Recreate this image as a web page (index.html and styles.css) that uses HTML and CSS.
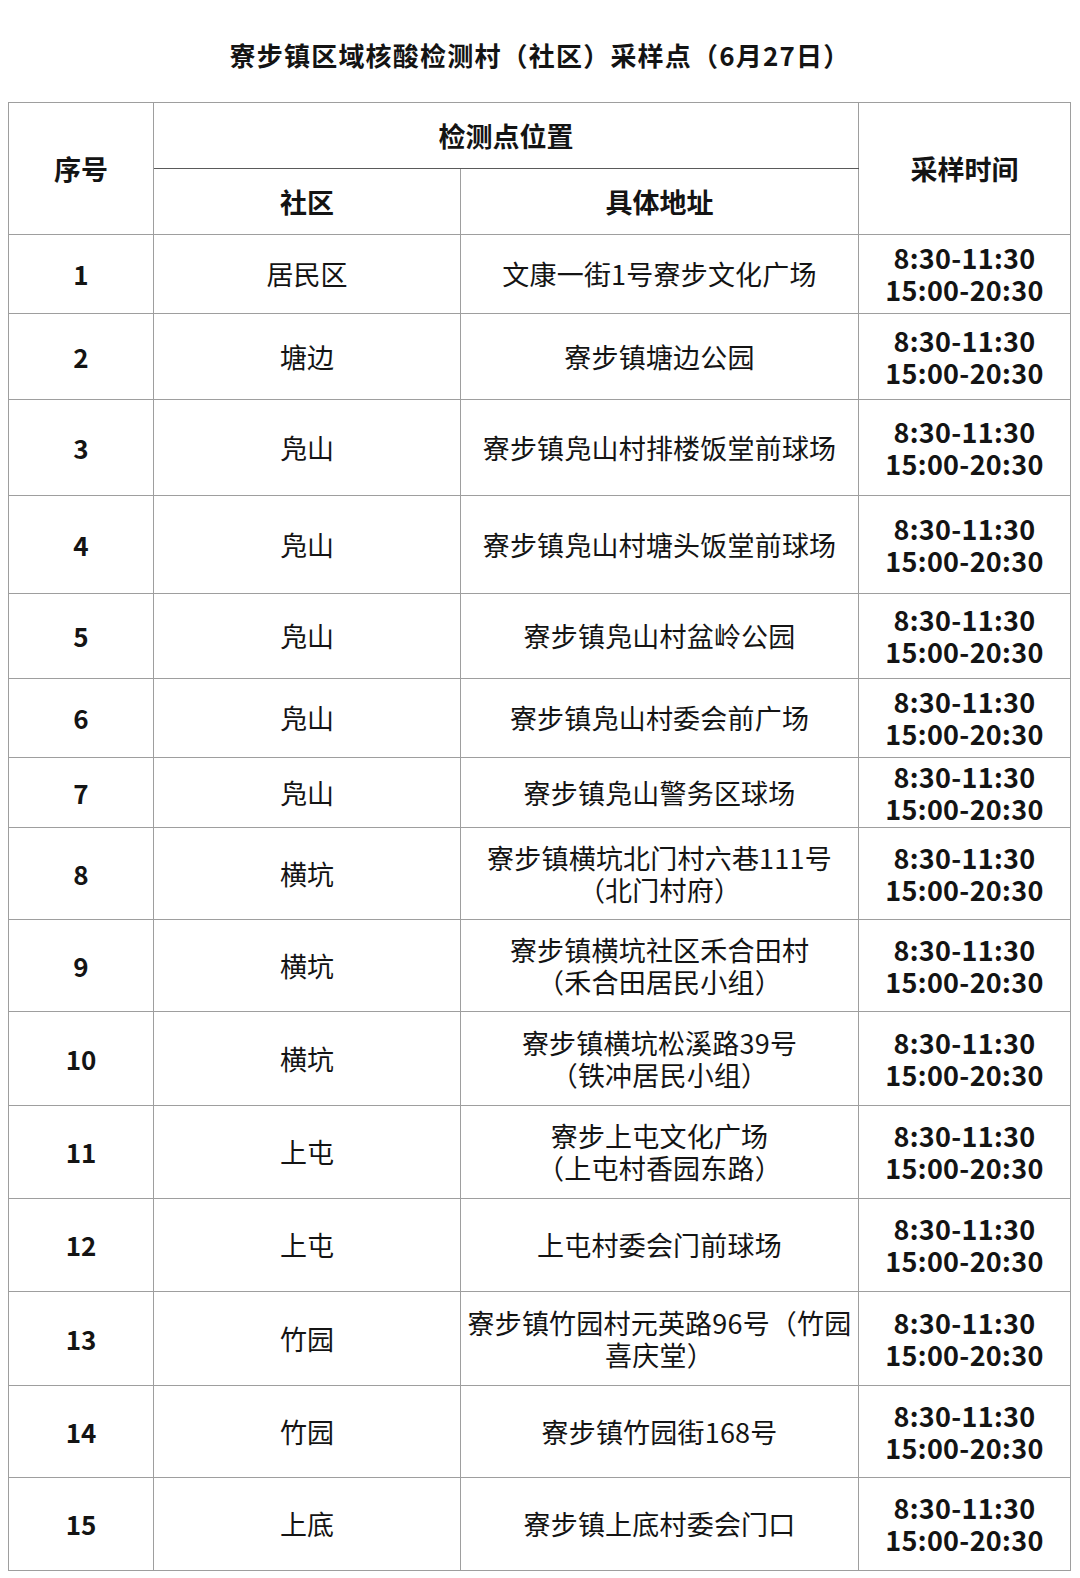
FILE: index.html
```html
<!DOCTYPE html>
<html lang="zh-CN">
<head>
<meta charset="utf-8">
<title>寮步镇区域核酸检测村（社区）采样点（6月27日）</title>
<link rel="stylesheet" href="styles.css">
</head>
<body>
<h1 class="title">寮步镇区域核酸检测村（社区）采样点（6月27日）</h1>
<table class="sites">
  <colgroup>
    <col class="c-no"><col class="c-area"><col class="c-addr"><col class="c-time">
  </colgroup>
  <thead>
    <tr class="h1">
      <th rowspan="2">序号</th>
      <th colspan="2" class="loc">检测点位置</th>
      <th rowspan="2" class="time-h">采样时间</th>
    </tr>
    <tr class="h2">
      <th>社区</th>
      <th class="addr-h">具体地址</th>
    </tr>
  </thead>
  <tbody>
    <tr><td class="no">1</td><td>居民区</td><td class="addr">文康一街1号寮步文化广场</td><td class="time">8:30-11:30<br>15:00-20:30</td></tr>
    <tr><td class="no">2</td><td>塘边</td><td class="addr">寮步镇塘边公园</td><td class="time">8:30-11:30<br>15:00-20:30</td></tr>
    <tr><td class="no">3</td><td>凫山</td><td class="addr">寮步镇凫山村排楼饭堂前球场</td><td class="time">8:30-11:30<br>15:00-20:30</td></tr>
    <tr><td class="no">4</td><td>凫山</td><td class="addr">寮步镇凫山村塘头饭堂前球场</td><td class="time">8:30-11:30<br>15:00-20:30</td></tr>
    <tr><td class="no">5</td><td>凫山</td><td class="addr">寮步镇凫山村盆岭公园</td><td class="time">8:30-11:30<br>15:00-20:30</td></tr>
    <tr><td class="no">6</td><td>凫山</td><td class="addr">寮步镇凫山村委会前广场</td><td class="time">8:30-11:30<br>15:00-20:30</td></tr>
    <tr><td class="no">7</td><td>凫山</td><td class="addr">寮步镇凫山警务区球场</td><td class="time">8:30-11:30<br>15:00-20:30</td></tr>
    <tr><td class="no">8</td><td>横坑</td><td class="addr">寮步镇横坑北门村六巷111号<br>（北门村府）</td><td class="time">8:30-11:30<br>15:00-20:30</td></tr>
    <tr><td class="no">9</td><td>横坑</td><td class="addr">寮步镇横坑社区禾合田村<br>（禾合田居民小组）</td><td class="time">8:30-11:30<br>15:00-20:30</td></tr>
    <tr><td class="no">10</td><td>横坑</td><td class="addr">寮步镇横坑松溪路39号<br>（铁冲居民小组）</td><td class="time">8:30-11:30<br>15:00-20:30</td></tr>
    <tr><td class="no">11</td><td>上屯</td><td class="addr">寮步上屯文化广场<br>（上屯村香园东路）</td><td class="time">8:30-11:30<br>15:00-20:30</td></tr>
    <tr><td class="no">12</td><td>上屯</td><td class="addr">上屯村委会门前球场</td><td class="time">8:30-11:30<br>15:00-20:30</td></tr>
    <tr><td class="no">13</td><td>竹园</td><td class="addr">寮步镇竹园村元英路96号（竹园<br>喜庆堂）</td><td class="time">8:30-11:30<br>15:00-20:30</td></tr>
    <tr><td class="no">14</td><td>竹园</td><td class="addr">寮步镇竹园街168号</td><td class="time">8:30-11:30<br>15:00-20:30</td></tr>
    <tr><td class="no">15</td><td>上底</td><td class="addr">寮步镇上底村委会门口</td><td class="time">8:30-11:30<br>15:00-20:30</td></tr>
  </tbody>
</table>
</body>
</html>
```

FILE: styles.css
```css
html, body {
  margin: 0;
  padding: 0;
  background: #ffffff;
}

body {
  width: 1080px;
  font-family: "Noto Sans CJK SC", "Noto Sans", sans-serif;
  color: #141414;
}

.title {
  margin: 0;
  height: 102px;
  box-sizing: border-box;
  padding-top: 37px;
  font-size: 26px;
  line-height: 36px;
  font-weight: 700;
  text-align: center;
  letter-spacing: 1.2px;
}

.sites {
  margin-left: 8px;
  width: 1062px;
  border-collapse: collapse;
  table-layout: fixed;
}

.c-no { width: 145px; }
.c-area { width: 307px; }
.c-addr { width: 398px; }
.c-time { width: 212px; }

.sites th,
.sites td {
  border: 1px solid #9e9e9e;
  padding: 0;
  text-align: center;
  vertical-align: middle;
  font-size: 27px;
  line-height: 32px;
  white-space: nowrap;
}

.sites th {
  font-weight: 700;
}

.h1 th,
.h2 th {
  height: 65px;
}

.sites .loc {
  border-bottom-color: #5a5a5a;
}

.sites .addr-h,
.sites td.addr {
  border-left-color: #6a6a6a;
}

.sites td {
  font-weight: 400;
}

.sites td.addr {
  letter-spacing: 0.2px;
}

.sites td.no {
  font-weight: 700;
  font-size: 26px;
}

.sites td.time {
  font-weight: 700;
  font-size: 27px;
  line-height: 32px;
  letter-spacing: 0.3px;
}

tbody tr:nth-child(1) td { height: 78px; }
tbody tr:nth-child(2) td { height: 85px; }
tbody tr:nth-child(3) td { height: 95px; }
tbody tr:nth-child(4) td { height: 97px; }
tbody tr:nth-child(5) td { height: 84px; }
tbody tr:nth-child(6) td { height: 78px; }
tbody tr:nth-child(7) td { height: 69px; }
tbody tr:nth-child(8) td { height: 91px; }
tbody tr:nth-child(9) td { height: 91px; }
tbody tr:nth-child(10) td { height: 93px; }
tbody tr:nth-child(11) td { height: 92px; }
tbody tr:nth-child(12) td { height: 92px; }
tbody tr:nth-child(13) td { height: 93px; }
tbody tr:nth-child(14) td { height: 91px; }
tbody tr:nth-child(15) td { height: 92px; }
```
